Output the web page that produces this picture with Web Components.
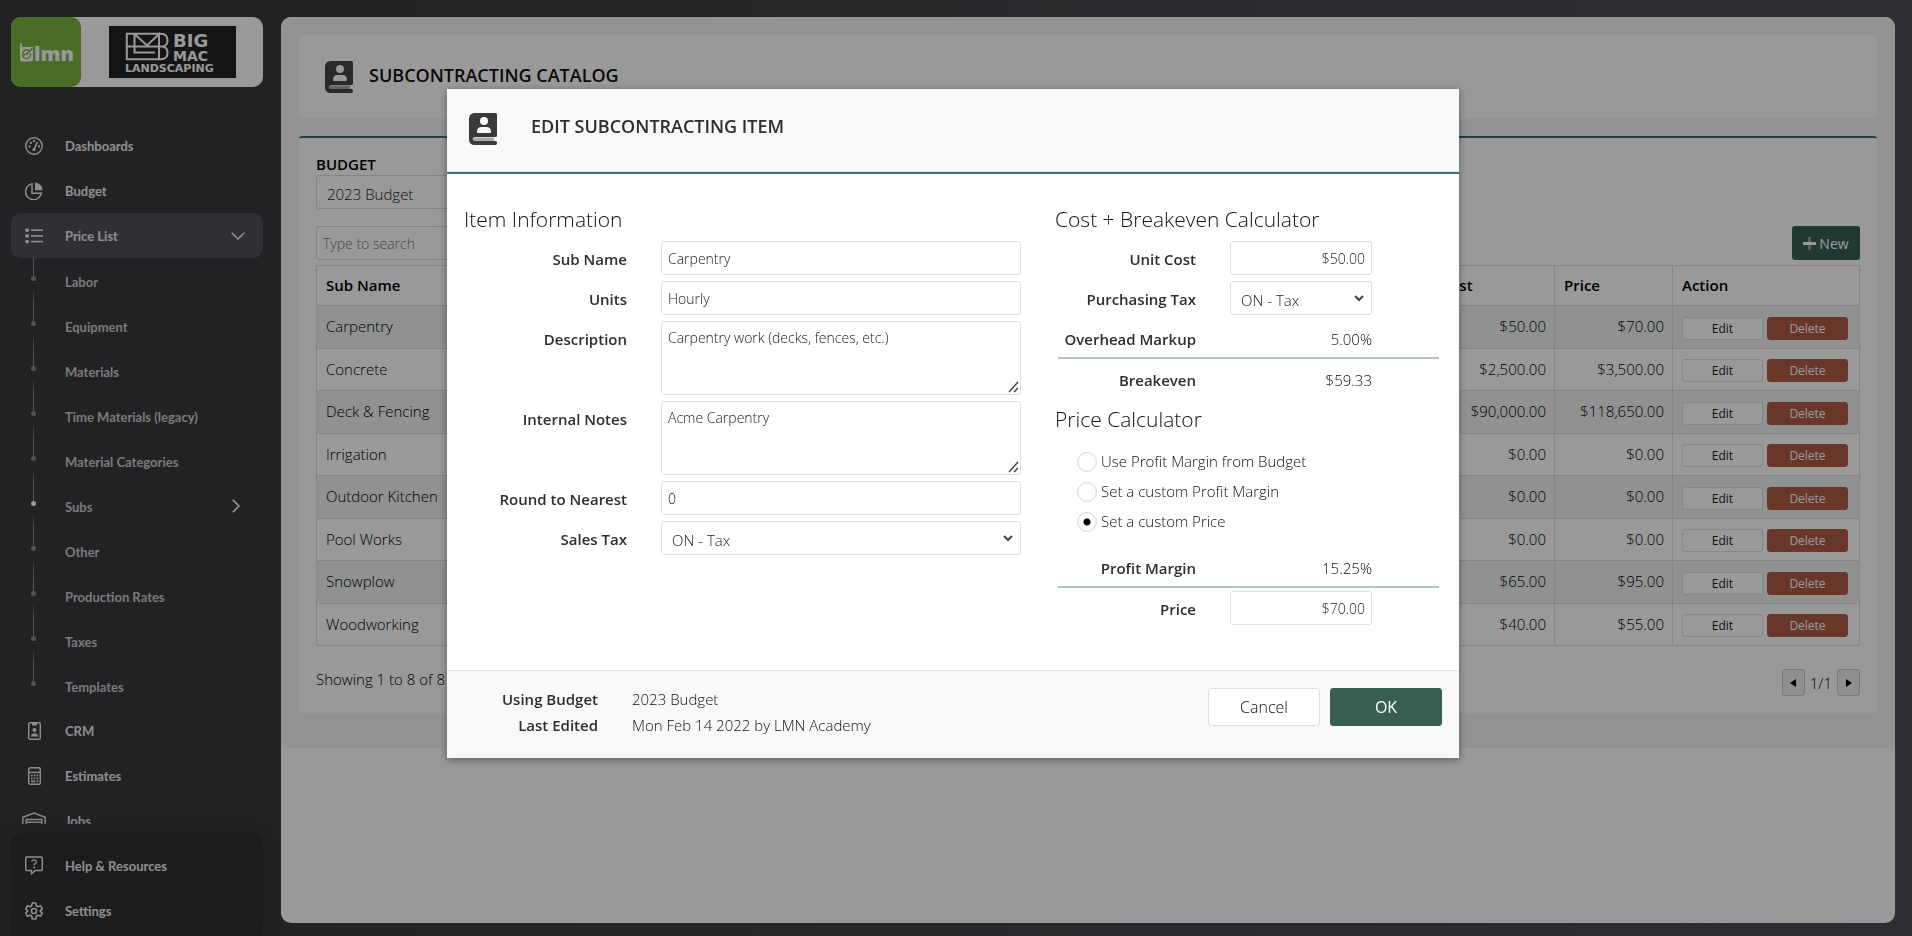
<!DOCTYPE html>
<html lang="en">
<head>
<meta charset="utf-8">
<title>Subcontracting Catalog</title>
<style>
    html, body {
        height: 100%;
        margin: 0;
    }
    body {
        font-family: "Open Sans", "Noto Sans", sans-serif;
        font-size: 15px;
        font-weight: 300;
        color: #111;
        background: linear-gradient(90deg, #3a3a3c 15%, #4e4d57);
        overflow: hidden;
    }
</style>
</head>
<body>
<app-shell>
    <side-bar slot="nav"></side-bar>
    <page-header heading="Subcontracting Catalog"></page-header>
    <catalog-table></catalog-table>
</app-shell>

<edit-dialog heading="Edit Subcontracting Item">
    <form-section slot="left" heading="Item Information">
        <field-row label="Sub Name" value="Carpentry"></field-row>
        <field-row label="Units" value="Hourly"></field-row>
        <field-row label="Description" type="textarea" value="Carpentry work (decks, fences, etc.)"></field-row>
        <field-row label="Internal Notes" type="textarea" value="Acme Carpentry"></field-row>
        <field-row label="Round to Nearest" value="0"></field-row>
        <field-row label="Sales Tax" type="select" value="ON - Tax"></field-row>
    </form-section>
    <form-section slot="right" heading="Cost + Breakeven Calculator">
        <field-row narrow label="Unit Cost" value="$50.00"></field-row>
        <field-row narrow label="Purchasing Tax" type="select" value="ON - Tax"></field-row>
        <field-row narrow label="Overhead Markup" type="static" value="5.00%"></field-row>
        <field-row narrow total label="Breakeven" type="static" value="$59.33"></field-row>
    </form-section>
    <form-section slot="right" heading="Price Calculator">
        <price-mode></price-mode>
        <field-row narrow label="Profit Margin" type="static" value="15.25%"></field-row>
        <field-row narrow total label="Price" value="$70.00"></field-row>
    </form-section>
</edit-dialog>

<script>
const ICONS = {
    dashboard: `<svg width="18" height="18" viewBox="0 0 18 18" fill="none" stroke="currentColor" stroke-width="1.4">
        <circle cx="9" cy="9" r="8.2"/>
        <circle cx="9" cy="12.6" r="1.5" fill="currentColor" stroke="none"/>
        <path d="M9.2 12.4L12 5.6" stroke-width="1.6" stroke-linecap="round"/>
        <g fill="currentColor" stroke="none"><rect x="3.4" y="8.4" width="2" height="2"/><rect x="4.8" y="4.8" width="2" height="2"/><rect x="8" y="3" width="2" height="2"/><rect x="13" y="8.4" width="2" height="2"/></g></svg>`,
    budget: `<svg width="18" height="18" viewBox="0 0 18 18" fill="none" stroke="currentColor" stroke-width="1.5">
        <path d="M7 1.8A8 8 0 1 0 16.4 11.2H7z"/>
        <path d="M10 0.4A8 8 0 0 1 17.6 8.2H10z" fill="currentColor" stroke="none"/></svg>`,
    list: `<svg width="18" height="16" viewBox="0 0 18 16" fill="currentColor">
        <rect x="0.3" y="0.5" width="3.6" height="3.4" rx="1"/><rect x="0.3" y="6.2" width="3.6" height="3.4" rx="1"/><rect x="0.3" y="11.9" width="3.6" height="3.4" rx="1"/>
        <rect x="6" y="1.4" width="12" height="1.6"/><rect x="6" y="7.1" width="12" height="1.6"/><rect x="6" y="12.8" width="12" height="1.6"/></svg>`,
    crm: `<svg width="13" height="18" viewBox="0 0 13 18" fill="none" stroke="currentColor" stroke-width="1.4">
        <rect x="0.7" y="0.7" width="11.6" height="16.6" rx="1.6"/>
        <g fill="currentColor" stroke="none"><rect x="4" y="1" width="5" height="2.4" rx="0.6"/><circle cx="6.5" cy="8" r="2.1"/><path d="M3 14.6c0-2.6 1.4-3.4 3.5-3.4s3.5.8 3.5 3.4z"/></g></svg>`,
    estimates: `<svg width="13" height="18" viewBox="0 0 13 18" fill="none" stroke="currentColor" stroke-width="1.4">
        <rect x="0.7" y="0.7" width="11.6" height="16.6" rx="1.6"/><path d="M1 5.4h11"/>
        <g fill="currentColor" stroke="none"><path d="M3 7.6h1.6v1.6H3zM5.8 7.6h1.6v1.6H5.8zM8.6 7.6h1.6v1.6H8.6zM3 10.6h1.6v1.6H3zM5.8 10.6h1.6v1.6H5.8zM8.6 10.6h1.6v1.6H8.6zM3 13.6h4.2v1.6H3zM8.6 13.6h1.6v1.6H8.6z"/></g></svg>`,
    jobs: `<svg width="24" height="18" viewBox="0 0 24 18" fill="none" stroke="currentColor" stroke-width="1.5">
        <path d="M0.8 18V5.2L12 1l11.2 4.2V18M4.2 18V7.4h15.6V18M4.2 10.2h15.6M4.2 13h15.6M4.2 16h15.6"/></svg>`,
    help: `<svg width="18" height="19" viewBox="0 0 18 19" fill="none" stroke="currentColor" stroke-width="1.4">
        <path d="M1.7 1h14.6q1 0 1 1v11.5q0 1-1 1H10.5L6.5 17.8V14.5H1.7q-1 0-1-1V2q0-1 1-1z"/>
        <path d="M6.7 5.8Q6.9 3.9 9 3.9T11.3 5.9Q11.3 7 10.2 7.6T9.1 9.4" stroke-width="1.3"/><circle cx="9.1" cy="11.5" r="0.9" fill="currentColor" stroke="none"/></svg>`,
    settings: `<svg width="18" height="18" viewBox="1.3 1.3 21.4 21.4" fill="none" stroke="currentColor" stroke-width="1.9">
        <circle cx="12" cy="12" r="3"/><path d="M10 2.5h4l.8 3.3 1.9 1.1 3.2-1 2 3.5L19.5 11.8 19.5 12.2 21.9 14.6 19.9 18.1 16.7 17.1 14.8 18.2 14 21.5H10L9.2 18.2 7.3 17.1 4.1 18.1 2.1 14.6 4.5 12.2V11.8L2.1 9.4 4.1 5.9 7.3 6.9 9.2 5.8z" stroke-linejoin="round"/></svg>`,
    book: `<svg width="28" height="32" viewBox="0 0 28 32">
        <path d="M3 24.5h22v4.5H3z" fill="#a9a9ab"/>
        <path fill="currentColor" fill-rule="evenodd" d="M6 0H26.5Q28 0 28 1.5V22.5Q28 24 26.5 24H6Q3.6 24 3.6 26T6 28H26.5Q28 28 28 30T26.5 32H6Q0 32 0 26V6Q0 0 6 0zM15 4a4 4 0 1 0 0 8a4 4 0 1 0 0-8zM12.5 14Q8 14 8 19Q8 20 9 20H21Q22 20 22 19Q22 14 17.5 14z"/></svg>`,
    down: `<svg width="14" height="8" viewBox="0 0 14 8" fill="none" stroke="currentColor" stroke-width="1.6"><path d="M.7.8L7 7 13.3.8"/></svg>`,
    right: `<svg width="8" height="14" viewBox="0 0 8 14" fill="none" stroke="currentColor" stroke-width="1.6"><path d="M.8.7L7 7 .8 13.3"/></svg>`
};

class AppShell extends HTMLElement {
    constructor() {
        super();
        this.attachShadow({ mode: "open" }).innerHTML = `
            <style>
                :host {
                    display: flex;
                    gap: 18px;
                    height: 100vh;
                }
                main {
                    flex: 1;
                    min-width: 0;
                    margin: 17px 17px 13px 0;
                    border-radius: 10px;
                    background: #fff;
                    overflow: hidden;
                }
                .page {
                    display: flex;
                    flex-direction: column;
                    gap: 17px;
                    padding: 18px 18px 35px;
                    background: #f5f5f5;
                }
            </style>
            <slot name="nav"></slot>
            <main><div class="page"><slot></slot></div></main>`;
    }
}

class SideBar extends HTMLElement {
    constructor() {
        super();
        const subs = ["Labor", "Equipment", "Materials", "Time Materials (legacy)", "Material Categories",
            "Subs", "Other", "Production Rates", "Taxes", "Templates"];

        this.attachShadow({ mode: "open" }).innerHTML = `
            <style>
                :host {
                    display: flex;
                    flex-direction: column;
                    box-sizing: border-box;
                    width: 263px;
                    padding: 17px 0 0 11px;
                    font-family: Lato, sans-serif;
                    font-size: 13px;
                    font-weight: 700;
                    color: #ededf0;
                }
                brand-logo {
                    margin-bottom: 36px;
                }
                nav {
                    flex: 1;
                    min-height: 0;
                    overflow: hidden;
                }
                a {
                    display: flex;
                    align-items: center;
                    height: 45px;
                    padding-right: 18px;
                    border-radius: 10px;
                    color: inherit;
                    text-decoration: none;
                }
                a span {
                    flex: 1;
                }
                a i {
                    display: flex;
                    justify-content: center;
                    width: 46px;
                    margin-right: 8px;
                }
                a.open {
                    background: #4e5057;
                }
                a.sub {
                    color: #c9cbcd;
                }
                a.sub span {
                    padding-top: 3px;
                }
                /* timeline: solid line, dot, then a line that fades in */
                a.sub i {
                    flex-direction: column;
                    justify-content: flex-start;
                    align-items: center;
                    height: 45px;
                    width: 45px;
                    margin-right: 9px;
                }
                a.sub i::before {
                    content: "";
                    width: 1px;
                    height: 18px;
                    background: #8a8a8c;
                }
                a.sub i b {
                    width: 5px;
                    height: 5px;
                    border-radius: 50%;
                    background: #8a8a8c;
                }
                a.sub.current i b {
                    background: #fff;
                }
                a.sub:not(.last) i::after {
                    content: "";
                    width: 1px;
                    flex: 1;
                    background: linear-gradient(transparent 30%, #8a8a8c);
                }
                a.sub svg {
                    margin-right: 5px;
                    color: #fff;
                }
                footer {
                    margin-top: 9px;
                    padding: 10px 0 3px;
                    border-radius: 10px 10px 0 0;
                    background: #2f2f2f;
                    box-shadow: 0 0 24px rgba(47, 47, 47, 0.7);
                }
            </style>
            <brand-logo></brand-logo>
            <nav>
                ${this.item("dashboard", "Dashboards")}
                ${this.item("budget", "Budget")}
                <a class="open" href="#"><i>${ICONS.list}</i><span>Price List</span>${ICONS.down}</a>
                ${subs.map((s, n) => this.subItem(s, n === subs.length - 1)).join("")}
                ${this.item("crm", "CRM")}
                ${this.item("estimates", "Estimates")}
                ${this.item("jobs", "Jobs")}
            </nav>
            <footer>
                ${this.item("help", "Help &amp; Resources")}
                ${this.item("settings", "Settings")}
            </footer>`;
    }

    item(icon, text) {
        return `<a href="#"><i>${ICONS[icon]}</i><span>${text}</span></a>`;
    }

    subItem(text, last) {
        const current = text === "Subs";
        return `<a class="sub ${current ? "current" : ""} ${last ? "last" : ""}" href="#"><i><b></b></i><span>${text}</span>${current ? ICONS.right : ""}</a>`;
    }
}

class BrandLogo extends HTMLElement {
    constructor() {
        super();
        this.attachShadow({ mode: "open" }).innerHTML = `
            <style>
                :host {
                    display: flex;
                    height: 70px;
                    border-radius: 10px;
                    background: #fff;
                }
                .lmn {
                    display: block;
                    border-radius: 10px;
                    background: #7bb441;
                }
                .client {
                    flex: 1;
                    display: flex;
                    align-items: center;
                    justify-content: center;
                }
            </style>
            <svg class="lmn" width="70" height="70" viewBox="0 0 70 70" fill="#fff">
                <path d="M9 25L11 27.5V30H22V42Q22 44.5 19.5 44.5H11.5Q9 44.5 9 42z"/>
                <path d="M12.5 38.5L18.5 34.5Q17 32 14.5 33T11.5 37.500Q12 41.5 15.5 41.5T19.8 36.5M16 37.5L21.5 31" fill="none" stroke="#7bb441" stroke-width="1.4"/>
                <text x="23" y="44" font-family="Open Sans" font-weight="800" font-size="20">lmn</text>
            </svg>
            <div class="client">
                <svg width="127" height="52" viewBox="0 0 127 52" fill="#fff" font-family="DejaVu Sans" font-weight="700">
                    <rect width="127" height="52" fill="#242424"/>
                    <path d="M17.8 7.8H52Q58.5 8 58.5 14.5Q58.5 19.5 54 20.5Q58.5 21.5 58.5 27Q58.5 33.2 52 33.2H17.8zM17.8 20.5H54M25.5 8V26.5H46M25.5 8L38 19.5L50 8V33" fill="none" stroke="#fff" stroke-width="2"/>
                    <text x="64" y="21" font-size="18">BIG</text>
                    <text x="64" y="35" font-size="14">MAC</text>
                    <text x="16" y="46" font-size="11">LANDSCAPING</text>
                </svg>
            </div>`;
    }
}

class PageHeader extends HTMLElement {
    constructor() {
        super();
        this.attachShadow({ mode: "open" }).innerHTML = `
            <style>
                :host {
                    display: flex;
                    align-items: center;
                    gap: 16px;
                    height: 84px;
                    padding: 0 26px;
                    border-radius: 3px;
                    background: #fff;
                }
                svg {
                    color: #434345;
                }
                h1 {
                    margin: 0 0 4px;
                    font-size: 18px;
                    font-weight: 600;
                    text-transform: uppercase;
                }
            </style>
            ${ICONS.book}
            <h1>${this.getAttribute("heading")}</h1>`;
    }
}

class CatalogTable extends HTMLElement {
    constructor() {
        super();
        this.items = [
            ["Carpentry", "$50.00", "$70.00"],
            ["Concrete", "$2,500.00", "$3,500.00"],
            ["Deck &amp; Fencing", "$90,000.00", "$118,650.00"],
            ["Irrigation", "$0.00", "$0.00"],
            ["Outdoor Kitchen", "$0.00", "$0.00"],
            ["Pool Works", "$0.00", "$0.00"],
            ["Snowplow", "$65.00", "$95.00"],
            ["Woodworking", "$40.00", "$55.00"]
        ];

        this.attachShadow({ mode: "open" }).innerHTML = `
            <style>
                :host {
                    display: block;
                    padding: 15px 17px 17px;
                    border-top: 2px solid #3f6e70;
                    border-radius: 3px;
                    background: #fff;
                    color: #000;
                }
                .budget {
                    display: flex;
                    flex-direction: column;
                    width: 300px;
                    margin-bottom: 17px;
                }
                .budget label {
                    font-weight: 600;
                    line-height: 22px;
                    text-transform: uppercase;
                }
                select, input {
                    box-sizing: border-box;
                    height: 34px;
                    border: 1px solid #dcdcdc;
                    border-radius: 3px;
                    background: #fff;
                    color: #222;
                    font: inherit;
                }
                select {
                    padding: 4px 6px 0;
                }
                input {
                    width: 300px;
                    padding: 0 6px;
                    font-size: 14px;
                }
                input::placeholder {
                    color: #777;
                }
                .bar {
                    display: flex;
                    justify-content: space-between;
                    align-items: center;
                    margin-bottom: 5px;
                }
                button {
                    box-sizing: border-box;
                    padding: 0;
                    border: 1px solid #e2e2e2;
                    border-radius: 3px;
                    background: #fff;
                    color: #1c1c1c;
                    font: 400 12px "Open Sans", sans-serif;
                }
                .new {
                    display: flex;
                    align-items: center;
                    justify-content: center;
                    gap: 3px;
                    width: 68px;
                    height: 34px;
                    border: 0;
                    background: #3a6055;
                    color: #fff;
                    font-size: 14px;
                }
                table {
                    width: 100%;
                    table-layout: fixed;
                    border-collapse: collapse;
                }
                th, td {
                    height: 42px;
                    box-sizing: border-box;
                    padding: 0 8px 2px 9px;
                    border: 1px solid #dcdfdf;
                    text-align: left;
                }
                th {
                    height: 40px;
                    font-weight: 600;
                }
                td.money {
                    text-align: right;
                }
                tbody tr:nth-child(odd) {
                    background: #f0f4f2;
                }
                tbody tr:nth-child(odd) td {
                    height: 43px;
                }
                .actions {
                    display: flex;
                    gap: 4px;
                    padding-top: 4px;
                }
                .actions button {
                    width: 81px;
                    height: 23px;
                }
                .actions .delete {
                    border-color: #ad5d46;
                    background: #ad5d46;
                    color: #fff;
                }
                .foot {
                    display: flex;
                    justify-content: space-between;
                    align-items: flex-start;
                    margin-top: 23px;
                }
                .pager {
                    display: flex;
                    align-items: center;
                    gap: 5px;
                }
                .pager button {
                    width: 23px;
                    height: 27px;
                    border-color: #cbcbcb;
                    background: #efefef;
                }
            </style>
            <div class="budget">
                <label for="budget">Budget</label>
                <select id="budget"><option>2023 Budget</option></select>
            </div>
            <div class="bar">
                <input type="search" placeholder="Type to search" aria-label="Search">
                <button class="new"><svg width="13" height="13" viewBox="0 0 13 13"><path d="M6.5 0v13" stroke="#8fa39c" stroke-width="3"/><path d="M0 6.5h13" stroke="#fff" stroke-width="3"/></svg>New</button>
            </div>
            <table>
                <colgroup><col><col style="width:158px"><col style="width:118px"><col style="width:187px"></colgroup>
                <thead><tr><th>Sub Name</th><th>Unit Cost</th><th>Price</th><th>Action</th></tr></thead>
                <tbody>${this.items.map(i => this.row(i)).join("")}</tbody>
            </table>
            <div class="foot">
                <span>Showing 1 to 8 of 8</span>
                <div class="pager">
                    <button aria-label="Previous page"><svg width="6" height="8" viewBox="0 0 6 8"><path d="M6 0v8L0 4z"/></svg></button>
                    <span>1/1</span>
                    <button aria-label="Next page"><svg width="6" height="8" viewBox="0 0 6 8"><path d="M0 0v8l6-4z"/></svg></button>
                </div>
            </div>`;
    }

    row([name, cost, price]) {
        return `<tr><td>${name}</td><td class="money">${cost}</td><td class="money">${price}</td>
            <td><div class="actions"><button>Edit</button><button class="delete">Delete</button></div></td></tr>`;
    }
}

class EditDialog extends HTMLElement {
    constructor() {
        super();
        this.attachShadow({ mode: "open" }).innerHTML = `
            <style>
                :host {
                    position: fixed;
                    inset: 0;
                    display: flex;
                    justify-content: center;
                    align-items: flex-start;
                    padding: 89px 6px 0 0;
                    background: rgba(0, 0, 0, 0.4);
                }
                .dialog {
                    width: min(1012px, 100%);
                    background: #fff;
                    box-shadow: 0 2px 8px rgba(0, 0, 0, 0.4);
                }
                header {
                    display: flex;
                    align-items: flex-start;
                    gap: 34px;
                    padding: 24px 22px 26px;
                    border-bottom: 1px solid #dfe3e5;
                    background: #f8f9fb;
                }
                header svg {
                    color: #3a3a3c;
                }
                h2 {
                    margin: 0;
                    font-size: 18px;
                    font-weight: 600;
                    line-height: 27px;
                    text-transform: uppercase;
                    color: #2e2e2e;
                }
                .body {
                    display: grid;
                    grid-template-columns: 557fr 387fr;
                    gap: 34px;
                    padding: 30px 17px 45px;
                    border-top: 2px solid #437272;
                }
                .col {
                    display: flex;
                    flex-direction: column;
                    gap: 8px;
                }
                footer {
                    display: flex;
                    align-items: flex-start;
                    justify-content: space-between;
                    padding: 15px 17px 20px;
                    border-top: 1px solid #e2e4e6;
                    background: #f8f9fb;
                }
                dl {
                    display: grid;
                    grid-template-columns: 134px auto;
                    column-gap: 34px;
                    margin: 0;
                    line-height: 26px;
                }
                dt {
                    text-align: right;
                    font-weight: 600;
                    color: #2e2e2e;
                }
                dd {
                    margin: 0;
                }
                .buttons {
                    display: flex;
                    gap: 10px;
                    padding-top: 2px;
                }
                button {
                    width: 112px;
                    height: 38px;
                    border: 1px solid #dfe1e3;
                    border-radius: 3px;
                    background: #fff;
                    color: #111;
                    font: inherit;
                    font-size: 16px;
                }
                button.ok {
                    border-color: #3a5e54;
                    background: #3a5e54;
                    color: #fff;
                    font-weight: 400;
                }
            </style>
            <div class="dialog" role="dialog" aria-modal="true">
                <header>${ICONS.book}<h2>${this.getAttribute("heading")}</h2></header>
                <div class="body">
                    <div class="col"><slot name="left"></slot></div>
                    <div class="col"><slot name="right"></slot></div>
                </div>
                <footer>
                    <dl>
                        <dt>Using Budget</dt><dd>2023 Budget</dd>
                        <dt>Last Edited</dt><dd>Mon Feb 14 2022 by LMN Academy</dd>
                    </dl>
                    <div class="buttons"><button>Cancel</button><button class="ok">OK</button></div>
                </footer>
            </div>`;
    }
}

class FormSection extends HTMLElement {
    constructor() {
        super();
        this.attachShadow({ mode: "open" }).innerHTML = `
            <style>
                :host {
                    display: block;
                }
                h3 {
                    margin: 0 0 7px;
                    font-size: 21px;
                    font-weight: 300;
                    line-height: 30px;
                }
                .rows {
                    display: flex;
                    flex-direction: column;
                    gap: 6px;
                }
            </style>
            <h3>${this.getAttribute("heading")}</h3>
            <div class="rows"><slot></slot></div>`;
    }
}

class FieldRow extends HTMLElement {
    constructor() {
        super();
        this.attachShadow({ mode: "open" }).innerHTML = `
            <style>
                :host {
                    display: grid;
                    grid-template-columns: 163fr 360fr;
                    gap: 34px;
                    align-items: start;
                }
                :host([narrow]) {
                    grid-template-columns: 141fr 142fr;
                    padding-right: 70px;
                    text-align: right;
                }
                /* rule above the last line of a sum */
                :host([total]) {
                    margin: -4px 3px 0;
                    padding: 3px 67px 0 0;
                    grid-template-columns: 138fr 142fr;
                    border-top: 2px solid #b0c6c3;
                }
                label, output {
                    height: 34px;
                    line-height: 36px;
                    text-align: right;
                    white-space: nowrap;
                }
                label {
                    font-weight: 600;
                    color: #2e2e2e;
                }
                input, textarea, select {
                    box-sizing: border-box;
                    width: 100%;
                    height: 34px;
                    margin: 0;
                    padding: 0 6px;
                    border: 1px solid #e1e1e1;
                    border-radius: 3px;
                    background: #fff;
                    color: #222;
                    font: inherit;
                    font-size: 14px;
                    text-align: inherit;
                }
                textarea {
                    display: block;
                    height: 74px;
                    padding-top: 6px;
                }
                textarea::-webkit-resizer {
                    background: url("data:image/svg+xml,%3Csvg xmlns='http://www.w3.org/2000/svg' width='15' height='15' fill='none' stroke='%23444' stroke-width='1.5'%3E%3Cpath d='M4 13L13 3M9 13L13 9'/%3E%3C/svg%3E") no-repeat right bottom;
                }
                select {
                    appearance: none;
                    padding: 4px 10px 0;
                    background: url("data:image/svg+xml,%3Csvg xmlns='http://www.w3.org/2000/svg' width='10' height='7' fill='none' stroke='%23444' stroke-width='2'%3E%3Cpath d='M1 1L5 5L9 1'/%3E%3C/svg%3E") no-repeat right 7px center;
                    font-size: 15px;
                    text-align: left;
                }
            </style>
            <label for="field">${this.getAttribute("label")}</label>
            ${this.control(this.getAttribute("type"), this.getAttribute("value"))}`;
    }

    control(type, value) {
        if (type === "textarea") return `<textarea id="field">${value}</textarea>`;
        if (type === "select") return `<select id="field"><option>${value}</option></select>`;
        if (type === "static") return `<output id="field">${value}</output>`;
        return `<input id="field" type="text" value="${value}">`;
    }
}

class PriceMode extends HTMLElement {
    constructor() {
        super();
        const modes = ["Use Profit Margin from Budget", "Set a custom Profit Margin", "Set a custom Price"];

        this.attachShadow({ mode: "open" }).innerHTML = `
            <style>
                :host {
                    display: block;
                    padding: 5px 0 8px 22px;
                }
                div {
                    display: flex;
                    align-items: center;
                    gap: 4px;
                    height: 30px;
                }
                input {
                    appearance: none;
                    box-sizing: border-box;
                    width: 20px;
                    height: 20px;
                    margin: 2px 0 0;
                    border: 1px solid #dcdcdc;
                    border-radius: 50%;
                    box-shadow: inset 0 0 1px #ccc;
                }
                input:checked {
                    background: radial-gradient(#000 3px, #fff 4px);
                }
            </style>
            ${modes.map((m, n) => `<div><input type="radio" name="mode" id="mode${n}" ${n === 2 ? "checked" : ""}><label for="mode${n}">${m}</label></div>`).join("")}`;
    }
}

customElements.define("brand-logo", BrandLogo);
customElements.define("side-bar", SideBar);
customElements.define("app-shell", AppShell);
customElements.define("page-header", PageHeader);
customElements.define("catalog-table", CatalogTable);
customElements.define("form-section", FormSection);
customElements.define("field-row", FieldRow);
customElements.define("price-mode", PriceMode);
customElements.define("edit-dialog", EditDialog);
</script>
</body>
</html>
